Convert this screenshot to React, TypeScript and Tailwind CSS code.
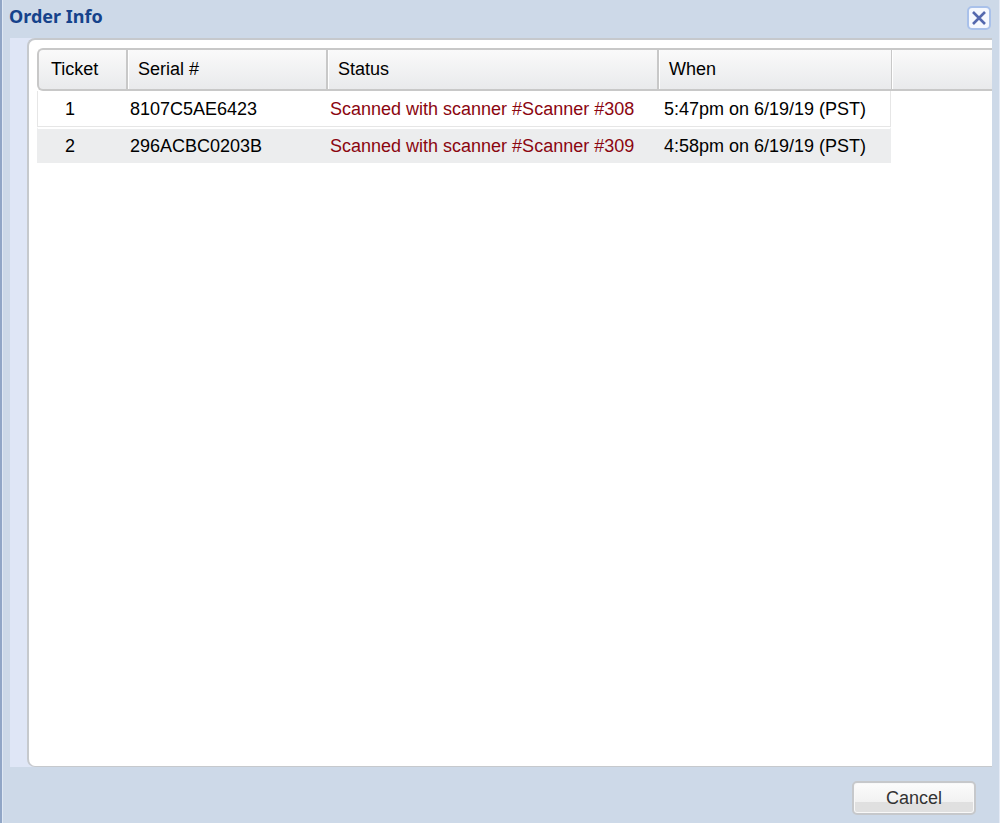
interface Ticket {
    id: number;
    serial: string;
    status: string;
    when: string;
}

const tickets: Ticket[] = [
    { id: 1, serial: '8107C5AE6423', status: 'Scanned with scanner #Scanner #308', when: '5:47pm on 6/19/19 (PST)' },
    { id: 2, serial: '296ACBC0203B', status: 'Scanned with scanner #Scanner #309', when: '4:58pm on 6/19/19 (PST)' },
];

const columns = [
    { label: 'Ticket', className: 'rounded-tl-md rounded-bl-md border-l-2 pl-3' },
    { label: 'Serial #', className: 'border-l-2 pl-[10px] shadow-[inset_1px_0_0_#fff]' },
    { label: 'Status', className: 'border-l-2 pl-[10px] shadow-[inset_1px_0_0_#fff]' },
    { label: 'When', className: 'border-l-2 pl-[10px] shadow-[inset_1px_0_0_#fff]' },
];

function TicketTable() {
    return (
        <table className="w-full table-fixed border-separate border-spacing-0 text-lg leading-5 text-black">
            <colgroup>
                <col className="w-[89px]" />
                <col className="w-[200px]" />
                <col className="w-[331px]" />
                <col className="w-[234px]" />
                <col />
            </colgroup>
            <thead>
                <tr>
                    {columns.map((column) => (
                        <th
                            key={column.label}
                            scope="col"
                            className={`h-[43px] border-t-2 border-b-2 border-[#c8c8c8] bg-linear-to-b from-[#fafafa] to-[#e9eaec] pb-0.5 text-left font-normal ${column.className}`}
                        >
                            {column.label}
                        </th>
                    ))}
                    <td className="h-[43px] border-t-2 border-b-2 border-l border-[#c8c8c8] bg-linear-to-b from-[#fafafa] to-[#e9eaec] shadow-[inset_1px_0_0_#fff]" />
                </tr>
            </thead>
            <tbody>
                {tickets.map((ticket, index) => {
                    const cell = index % 2
                        ? 'h-9 border-t-2 border-x-[#ecedee] border-t-white bg-[#ecedee] pb-px'
                        : 'h-9 border-b border-[#e6e6e6] bg-white';
                    return (
                        <tr key={ticket.id}>
                            <td className={`${cell} border-l pr-6 text-center`}>{ticket.id}</td>
                            <td className={`${cell} pl-1`}>{ticket.serial}</td>
                            <td className={`${cell} pl-1 text-[#8b0610]`}>{ticket.status}</td>
                            <td className={`${cell} border-r pl-[7px]`}>{ticket.when}</td>
                        </tr>
                    );
                })}
            </tbody>
        </table>
    );
}

export default function App() {
    return (
        <div
            role="dialog"
            aria-labelledby="order-info-title"
            className="flex min-h-screen flex-col border-r border-l-2 border-l-[#91a6c6] border-r-[#e4eaf5] bg-[#cdd9e8] pr-[7px] font-['Liberation_Sans',Arial,sans-serif] shadow-[inset_1px_0_0_#dfe8f4]"
        >
            <header className="flex h-[38px] items-start justify-between pr-px pl-[7px]">
                <h1
                    id="order-info-title"
                    className="pt-1 font-['Noto_Sans',Tahoma,sans-serif] text-lg leading-6 font-bold text-[#15428b]"
                >
                    Order Info
                </h1>
                <button
                    type="button"
                    aria-label="Close"
                    className="mt-1.5 flex size-6 items-center justify-center rounded-[5px] border-2 border-[#a9c1ea] bg-[#f5f8fe]"
                >
                    <svg viewBox="0 0 16 16" className="size-4" fill="none" stroke="#5468ae" strokeWidth="2.6">
                        <path d="M2 2 L14 14 M14 2 L2 14" />
                    </svg>
                </button>
            </header>

            <main className="ml-2 flex flex-1 flex-col bg-[#dfe6f6] pl-[17px]">
                <div className="flex-1 rounded-l-lg border-t-2 border-b border-l-2 border-[#c6c9cd] bg-white pt-2 pl-2">
                    <TicketTable />
                </div>
            </main>

            <footer className="flex h-14 items-start justify-end pt-[14px] pr-4">
                <button
                    type="button"
                    className="h-[34px] w-[124px] rounded-[5px] border-2 border-[#c6c8cb] bg-linear-to-b from-[#fcfcfc] from-0% via-[#f1f1f1] via-65% to-[#e0e0e0] to-65% text-lg leading-5 text-[#333] shadow-[inset_0_0_0_1px_#f8f8f8]"
                >
                    Cancel
                </button>
            </footer>
        </div>
    );
}
